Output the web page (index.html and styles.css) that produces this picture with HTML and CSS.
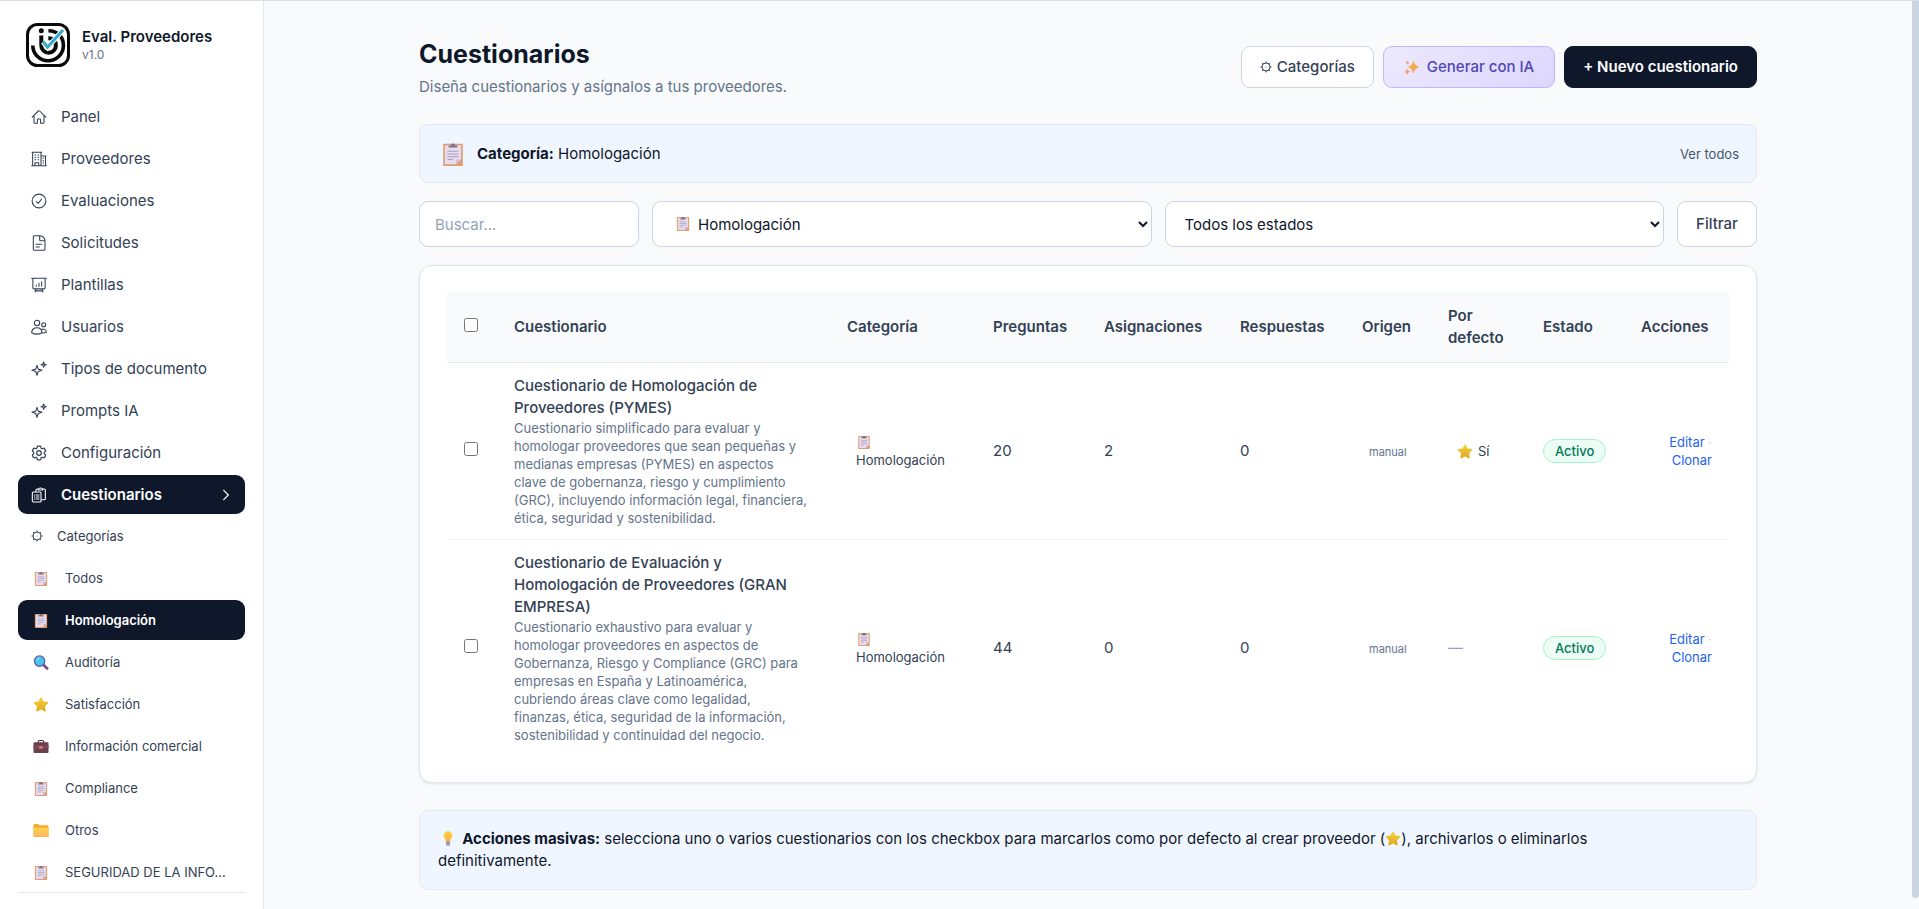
FILE: index.html
```
<!DOCTYPE html>
<html lang="es">
<head>
  <meta charset="utf-8">
  <title>Cuestionarios - Eval. Proveedores</title>
  <link rel="stylesheet" href="styles.css">
</head>
<body>
  <!-- Icon sprite -->
  <svg class="sprite" aria-hidden="true">
    <defs>
      <linearGradient id="g-star" x1="0" y1="0" x2="0" y2="1">
        <stop offset="0" stop-color="#f4cf3c"/><stop offset="1" stop-color="#e0aa1e"/>
      </linearGradient>
      <linearGradient id="g-folder" x1="0" y1="0" x2="0" y2="1">
        <stop offset="0" stop-color="#ffd24d"/><stop offset="1" stop-color="#fdb562"/>
      </linearGradient>
      <linearGradient id="g-spark" x1="0" y1="0" x2="1" y2="1">
        <stop offset="0" stop-color="#fbc02d"/><stop offset="1" stop-color="#f98b5c"/>
      </linearGradient>
    </defs>
    <symbol id="i-home" viewBox="0 0 24 24"><path d="M1.8 12.3 11 3a1.4 1.4 0 0 1 2 0l9.200 9.300M4.500 9.800v10.600c0 .6.500 1.100 1.100 1.100h4v-5.300c0-.7.500-1.200 1.100-1.200h2.600c.6 0 1.100.5 1.100 1.200v5.300h4c.6 0 1.100-.5 1.100-1.100V9.800"/></symbol>
    <symbol id="i-building" viewBox="0 0 24 24"><path d="M1 22h22M2.500 22V2M15 22V7.500M1.500 2h14.500M15.500 7.500h7M21.800 22V7.500M6 6h1M10.500 6h1M6 9.500h1M10.500 9.500h1M6 13h1M10.500 13h1M18 11h1M18 14.500h1M18 18h1M15 2v6M6 22v-4.500h5.500V22"/></symbol>
    <symbol id="i-check" viewBox="0 0 24 24"><circle cx="12" cy="12" r="10.300"/><path d="m8 12.800 2.800 2.700L16 9"/></symbol>
    <symbol id="i-doc" viewBox="0 0 24 24"><path d="M13.500 1H5a1.500 1.500 0 0 0-1.500 1.500v19A1.500 1.500 0 0 0 5 23h14.500a1.500 1.500 0 0 0 1.500-1.500V9.500C21 5 18 1 13.500 1zM13 1.500v5.500c0 .8.500 1.500 1.500 1.500H21M7.500 14h8.500M7.500 18h5"/></symbol>
    <symbol id="i-board" viewBox="0 0 24 24"><path d="M1 2h22M2.800 2v14c0 1 .8 1.800 1.800 1.800h14.800c1 0 1.800-.8 1.800-1.800V2M7.500 18 6 22.500M16.500 18l1.500 4.500M7 20.800h10M8 14v-2M12 14V9.500M16 14V7"/></symbol>
    <symbol id="i-users" viewBox="0 0 24 24"><circle cx="9" cy="6" r="4"/><circle cx="19" cy="8.500" r="3"/><path d="M1 20.500c0-4.500 3.300-7.500 8-7.500s7.500 3 7.500 7.500c-4.500 2.600-11 2.600-15.500 0zM16.500 21c2.500.3 4.700 0 6.500-1 0-3.500-3.500-6-7.500-4.300"/></symbol>
    <symbol id="i-sparkle" viewBox="0 0 24 24"><path d="M9 6.500 10.800 12.200 16.500 14l-5.700 1.800L9 21.500l-1.800-5.700L1.500 14l5.700-1.800zM19 1.500l1 3 3 1-3 1-1 3-1-3-3-1 3-1z"/></symbol>
    <symbol id="i-gear" viewBox="1.500 1.500 21 21"><path d="M9.600 3.900c.1-.5.500-.9 1.100-.9h2.600c.6 0 1 .4 1.100.9l.2 1.300c.1.400.3.700.6.900l.3.100c.3.200.7.300 1.100.1l1.200-.5c.5-.2 1.100 0 1.400.5l1.300 2.200c.3.500.2 1.100-.3 1.500l-1 .8c-.3.200-.4.600-.4 1v.4c0 .4.100.7.400 1l1 .8c.4.300.5 1 .3 1.400l-1.300 2.300c-.3.500-.9.700-1.400.5l-1.200-.5c-.4-.1-.8-.1-1.100.1l-.3.200c-.3.200-.5.500-.6.900l-.2 1.200c-.1.600-.5 1-1.100 1h-2.600c-.6 0-1-.4-1.100-1l-.2-1.200c-.1-.4-.3-.7-.6-.9l-.3-.2c-.3-.2-.7-.2-1.100-.1l-1.200.5c-.5.200-1.100 0-1.400-.5l-1.300-2.300c-.3-.4-.2-1.100.3-1.400l1-.8c.3-.3.400-.6.400-1v-.4c0-.4-.1-.8-.4-1l-1-.8c-.5-.4-.6-1-.3-1.500l1.300-2.200c.3-.5.900-.7 1.400-.5l1.200.5c.4.200.8.100 1.100-.1l.3-.1c.3-.2.500-.5.600-.9z"/><circle cx="12" cy="12" r="3"/></symbol>
    <symbol id="i-clips" viewBox="0 0 24 24"><path d="M3.500 7.500h10c.8 0 1.500.7 1.500 1.500v12c0 .8-.7 1.500-1.500 1.500h-10C2.700 22.500 2 21.800 2 21V9c0-.8.700-1.500 1.500-1.500zM7.500 7V4.500c0-.8.700-1.500 1.500-1.500h2M17.500 3H20c.8 0 1.500.7 1.500 1.500v13c0 .8-.7 1.500-1.500 1.500h-4.500M11 4.500c0-2 1.300-3 3.200-3s3.300 1 3.300 3zM5 12h.8M8 12h4M5 15h.8M8 15h4M5 18h.8M8 18h4"/></symbol>
    <symbol id="i-chevron" viewBox="0 0 24 24"><path d="m8 4 8 8-8 8"/></symbol>
    <symbol id="i-cog" viewBox="0 0 12 12"><circle cx="6" cy="6" r="4"/><path d="M6 .5V2M6 10v1.500M.5 6H2M10 6h1.500M2.100 2.100l1 1M8.900 8.900l1 1M2.100 9.900l1-1M8.900 3.100l1-1M5.600 6h.8"/></symbol>

    <symbol id="e-clipboard" viewBox="0 0 18 22"><rect x="0" y="1.500" width="18" height="20.500" rx="1" fill="#e39a6c"/><path d="M1.500 3h15v13l-4.500 4.500H1.500z" fill="#e6dcf0"/><path d="M16.500 16 12 20.500V16z" fill="#c9bcd8"/><path d="M5 5V3.300h2a2 2 0 0 1 4 0h2V5z" fill="#7c7386"/><path d="M4 8.500h10M4 11h10M4 13.500h10M4 16h5" stroke="#a99db8" stroke-width="1"/></symbol>
    <symbol id="e-search" viewBox="0 0 16 16"><path d="m10.500 10.500 4 3.800" stroke="#7b4a8c" stroke-width="3" stroke-linecap="round"/><circle cx="6.500" cy="6.500" r="5.500" fill="#4cc4ea" stroke="#5a5fa8" stroke-width="1.400"/><path d="M3.500 6a3 3 0 0 1 3-2.800" stroke="#a5e6f8" fill="none"/></symbol>
    <symbol id="e-star" viewBox="0 0 16 16"><path d="M8 1.200 10.100 5.400 15 6.200 11.500 9.700 12.300 14.700 8 12.500 3.700 14.700 4.500 9.700 1 6.200 5.900 5.400z" fill="url(#g-star)" stroke="url(#g-star)" stroke-width="1.500" stroke-linejoin="round"/></symbol>
    <symbol id="e-case" viewBox="0 0 16 16"><path d="M5.200 4V2.600c0-.6.400-1 1-1h3.600c.6 0 1 .4 1 1V4" fill="none" stroke="#4c2f3c" stroke-width="1.300"/><rect x="0" y="3.500" width="16" height="11.500" rx="1.200" fill="#6b4050"/><path d="M0 7h16v2.500H0z" fill="#7b4a58"/><rect x="6" y="7.500" width="4" height="3" rx=".5" fill="#d9775f"/></symbol>
    <symbol id="e-folder" viewBox="0 0 16 16"><path d="M0 2.500C0 1.700.5 1 1.300 1H5l1.500 1.500h8.200c.8 0 1.300.6 1.300 1.300V14c0 .6-.5 1-1 1H1c-.6 0-1-.4-1-1z" fill="#f3ad2a"/><path d="M0 5h16v9c0 .6-.5 1-1 1H1c-.6 0-1-.4-1-1z" fill="url(#g-folder)"/></symbol>
    <symbol id="e-sparkles" viewBox="0 0 16 16"><path d="M9.500.3c.8 3.700 2.200 5.800 6.300 7.200-4.100 1.400-5.500 3.500-6.300 7.200-.8-3.700-2.200-5.800-6.300-7.200C7.300 6.100 8.700 4 9.500.3z" fill="url(#g-spark)"/><path d="M3 9.500c.3 1.800.9 2.500 2.700 3-1.800.5-2.400 1.200-2.700 3-.3-1.800-.9-2.500-2.700-3 1.800-.5 2.400-1.200 2.700-3zM3.200 1c.2 1 .6 1.500 1.600 1.800-1 .3-1.400.8-1.600 1.800-.2-1-.6-1.500-1.600-1.800 1-.3 1.400-.8 1.600-1.800z" fill="#f9966b" stroke="#f9966b" stroke-width=".5"/></symbol>
    <symbol id="e-bulb" viewBox="0 0 12 16"><path d="M6 .3a4.700 4.700 0 0 1 4.700 4.800c0 2.500-2 3.600-2.300 5.900H3.600C3.300 8.700 1.300 7.600 1.300 5.100A4.700 4.700 0 0 1 6 .3z" fill="#fcc940"/><path d="M4.600 5.500 5.400 11h1.200l.8-5.500" fill="none" stroke="#f79a3c" stroke-width=".8"/><path d="M3.700 11h4.600v2.800L7.400 15.700H4.600l-.9-1.900z" fill="#a994b4"/></symbol>
  </svg>

  <aside class="sidebar">
    <div class="brand">
      <svg class="brand-logo" viewBox="0 0 44 44" fill="none">
        <rect x="1.500" y="1.500" width="41" height="41" rx="10" fill="#fff" stroke="#0a0a0a" stroke-width="3"/>
        <circle cx="15.300" cy="7.800" r="2.500" fill="#0a0a0a"/>
        <path d="M6.800 22.500a15.300 15.300 0 0 0 30.600 0c0-9-6-14.500-15-14.700" stroke="#0a0a0a" stroke-width="3.600"/>
        <path d="M15.300 12.500v10a7.300 7.300 0 0 0 14.600 0c0-4.500-3-7.200-7.600-7.200" stroke="#0a0a0a" stroke-width="4"/>
        <path d="m17 19 4.500 5.500L37 7" stroke="#fff" stroke-width="5"/>
        <path d="m17 18.500 4.500 5.700L37 7" stroke="#35a9cc" stroke-width="3"/>
      </svg>
      <div>
        <div class="brand-name">Eval. Proveedores</div>
        <div class="brand-version">v1.0</div>
      </div>
    </div>

    <nav class="nav">
      <a href="#" class="nav-item"><svg class="icon"><use href="#i-home"/></svg>Panel</a>
      <a href="#" class="nav-item"><svg class="icon"><use href="#i-building"/></svg>Proveedores</a>
      <a href="#" class="nav-item"><svg class="icon"><use href="#i-check"/></svg>Evaluaciones</a>
      <a href="#" class="nav-item"><svg class="icon"><use href="#i-doc"/></svg>Solicitudes</a>
      <a href="#" class="nav-item"><svg class="icon"><use href="#i-board"/></svg>Plantillas</a>
      <a href="#" class="nav-item"><svg class="icon"><use href="#i-users"/></svg>Usuarios</a>
      <a href="#" class="nav-item"><svg class="icon"><use href="#i-sparkle"/></svg>Tipos de documento</a>
      <a href="#" class="nav-item"><svg class="icon"><use href="#i-sparkle"/></svg>Prompts IA</a>
      <a href="#" class="nav-item"><svg class="icon"><use href="#i-gear"/></svg>Configuración</a>
      <a href="#" class="nav-item active"><svg class="icon"><use href="#i-clips"/></svg>Cuestionarios<svg class="icon icon-chevron"><use href="#i-chevron"/></svg></a>
    </nav>

    <nav class="subnav">
      <a href="#" class="subnav-item subnav-settings"><svg class="cog"><use href="#i-cog"/></svg>Categorías</a>
      <a href="#" class="subnav-item"><svg class="emoji"><use href="#e-clipboard"/></svg><span>Todos</span></a>
      <a href="#" class="subnav-item active"><svg class="emoji"><use href="#e-clipboard"/></svg><span>Homologación</span></a>
      <a href="#" class="subnav-item"><svg class="emoji"><use href="#e-search"/></svg><span>Auditoría</span></a>
      <a href="#" class="subnav-item"><svg class="emoji"><use href="#e-star"/></svg><span>Satisfacción</span></a>
      <a href="#" class="subnav-item"><svg class="emoji"><use href="#e-case"/></svg><span>Información comercial</span></a>
      <a href="#" class="subnav-item"><svg class="emoji"><use href="#e-clipboard"/></svg><span>Compliance</span></a>
      <a href="#" class="subnav-item"><svg class="emoji"><use href="#e-folder"/></svg><span>Otros</span></a>
      <a href="#" class="subnav-item"><svg class="emoji"><use href="#e-clipboard"/></svg><span>SEGURIDAD DE LA INFO...</span></a>
    </nav>
  </aside>

  <main class="main">
    <div class="container">
      <header class="page-header">
        <div>
          <h1>Cuestionarios</h1>
          <p>Diseña cuestionarios y asígnalos a tus proveedores.</p>
        </div>
        <div class="page-actions">
          <button type="button" class="btn"><svg class="cog"><use href="#i-cog"/></svg>Categorías</button>
          <button type="button" class="btn btn-ai"><svg class="emoji"><use href="#e-sparkles"/></svg>Generar con IA</button>
          <button type="button" class="btn btn-primary">+ Nuevo cuestionario</button>
        </div>
      </header>

      <div class="banner">
        <svg class="banner-icon"><use href="#e-clipboard"/></svg>
        <div><strong>Categoría:</strong> Homologación</div>
        <a href="#" class="banner-link">Ver todos</a>
      </div>

      <form class="filters">
        <input type="search" class="field field-search" placeholder="Buscar..." aria-label="Buscar">
        <div class="select-wrap">
          <select class="field field-icon" aria-label="Categoría">
            <option>Homologación</option>
          </select>
          <svg class="emoji select-icon"><use href="#e-clipboard"/></svg>
        </div>
        <div class="select-wrap">
          <select class="field" aria-label="Estado">
            <option>Todos los estados</option>
          </select>
        </div>
        <button type="button" class="btn btn-filter">Filtrar</button>
      </form>

      <section class="card">
        <table class="table">
          <colgroup>
            <col class="col-check">
            <col>
            <col class="col-category">
            <col class="col-questions">
            <col class="col-assigned">
            <col class="col-answers">
            <col class="col-origin">
            <col class="col-default">
            <col class="col-status">
            <col class="col-actions">
          </colgroup>
          <thead>
            <tr>
              <th><input type="checkbox" aria-label="Seleccionar todos"></th>
              <th>Cuestionario</th>
              <th>Categoría</th>
              <th>Preguntas</th>
              <th>Asignaciones</th>
              <th>Respuestas</th>
              <th>Origen</th>
              <th>Por defecto</th>
              <th>Estado</th>
              <th>Acciones</th>
            </tr>
          </thead>
          <tbody>
            <tr>
              <td><input type="checkbox" aria-label="Seleccionar PYMES"></td>
              <td>
                <div class="q-title">Cuestionario de Homologación de Proveedores (PYMES)</div>
                <div class="q-desc">Cuestionario simplificado para evaluar y homologar proveedores que sean pequeñas y medianas empresas (PYMES) en aspectos clave de gobernanza, riesgo y cumplimiento (GRC), incluyendo información legal, financiera, ética, seguridad y sostenibilidad.</div>
              </td>
              <td><div class="tag"><svg class="emoji emoji-sm"><use href="#e-clipboard"/></svg><span>Homologación</span></div></td>
              <td>20</td>
              <td>2</td>
              <td>0</td>
              <td><span class="origin">manual</span></td>
              <td><span class="default-yes"><svg class="emoji"><use href="#e-star"/></svg>Sí</span></td>
              <td><span class="badge">Activo</span></td>
              <td class="actions"><a href="#">Editar</a> · <a href="#">Clonar</a></td>
            </tr>
            <tr>
              <td><input type="checkbox" aria-label="Seleccionar GRAN EMPRESA"></td>
              <td>
                <div class="q-title">Cuestionario de Evaluación y Homologación de Proveedores (GRAN EMPRESA)</div>
                <div class="q-desc">Cuestionario exhaustivo para evaluar y homologar proveedores en aspectos de Gobernanza, Riesgo y Compliance (GRC) para empresas en España y Latinoamérica, cubriendo áreas clave como legalidad, finanzas, ética, seguridad de la información, sostenibilidad y continuidad del negocio.</div>
              </td>
              <td><div class="tag"><svg class="emoji emoji-sm"><use href="#e-clipboard"/></svg><span>Homologación</span></div></td>
              <td>44</td>
              <td>0</td>
              <td>0</td>
              <td><span class="origin">manual</span></td>
              <td><span class="default-no">—</span></td>
              <td><span class="badge">Activo</span></td>
              <td class="actions"><a href="#">Editar</a> · <a href="#">Clonar</a></td>
            </tr>
          </tbody>
        </table>
      </section>

      <div class="notice">
        <svg class="emoji notice-icon"><use href="#e-bulb"/></svg>
        <strong>Acciones masivas:</strong> selecciona uno o varios cuestionarios con los checkbox para marcarlos como por defecto al crear proveedor (<svg class="emoji"><use href="#e-star"/></svg>), archivarlos o eliminarlos<br>
        definitivamente.
      </div>
    </div>
  </main>
  <div class="scrollbar"></div>
</body>
</html>
```
FILE: styles.css
```
:root {
  --ink: #0f172a;
  --text: #334155;
  --muted: #64748b;
  --faint: #94a3b8;
  --border: #e2e8f0;
  --border-strong: #cbd5e1;
  --background: #f8fafc;
  --surface: #ffffff;
  --info: #eff6ff;
  --link: #2563eb;
  --radius: 9px;
}

* {
  box-sizing: border-box;
}

body {
  margin: 0;
  display: flex;
  min-height: 100vh;
  border-top: 1px solid #dcdfe4;
  font-family: Inter, "Liberation Sans", sans-serif;
  font-size: 15px;
  line-height: 22px;
  color: var(--ink);
  background: var(--background);
}

a {
  color: inherit;
  text-decoration: none;
}

button,
input,
select {
  font: inherit;
}

.sprite {
  position: absolute;
  width: 0;
  height: 0;
}

.icon {
  width: 16px;
  height: 16px;
  flex: none;
  fill: none;
  stroke: currentColor;
  stroke-width: 1.6;
  stroke-linecap: round;
  stroke-linejoin: round;
}

.cog {
  width: 12px;
  height: 12px;
  flex: none;
  fill: none;
  stroke: currentColor;
}

.emoji {
  width: 16px;
  height: 15px;
  flex: none;
  vertical-align: -2px;
}

/* Sidebar */
.sidebar {
  width: 264px;
  flex: none;
  padding: 22px 18px 0;
  background: var(--surface);
  border-right: 1px solid var(--border);
}

.brand {
  display: flex;
  align-items: center;
  gap: 12px;
  padding: 0 8px;
  margin-bottom: 30px;
}

.brand-logo {
  width: 44px;
  height: 44px;
}

.brand-name {
  font-weight: 600;
  line-height: 20px;
}

.brand-version {
  font-size: 12px;
  line-height: 16px;
  color: var(--muted);
}

.nav {
  display: flex;
  flex-direction: column;
  gap: 3px;
}

.nav-item {
  display: flex;
  align-items: center;
  gap: 14px;
  height: 39px;
  padding: 0 12px 0 13px;
  border-radius: var(--radius);
  color: var(--text);
}

.nav-item.active,
.subnav-item.active {
  background: var(--ink);
  color: #fff;
  font-weight: 600;
}

.icon-chevron {
  width: 14px;
  height: 14px;
  margin-left: auto;
  stroke-width: 2;
}

.subnav {
  display: flex;
  flex-direction: column;
  gap: 2px;
  padding-top: 2px;
  border-bottom: 1px solid var(--border);
}

.subnav-item {
  display: flex;
  align-items: center;
  gap: 16px;
  height: 40px;
  padding: 0 14px 0 15px;
  border-radius: var(--radius);
  font-size: 13px;
  color: var(--text);
}

.subnav-item span {
  overflow: hidden;
  white-space: nowrap;
  text-overflow: ellipsis;
}

.subnav-settings {
  gap: 14px;
  padding-left: 13px;
}

/* Page */
.main {
  flex: 1;
  min-width: 0;
  padding: 35px 33px 18px;
  margin-right: 7px;
}

.container {
  max-width: 1338px;
  margin: 0 auto;
}

.page-header {
  display: flex;
  justify-content: space-between;
  align-items: center;
  margin-bottom: 26px;
}

.page-header h1 {
  margin: 0 0 4px;
  font-size: 25px;
  line-height: 36px;
  font-weight: 700;
}

.page-header p {
  margin: 0;
  color: var(--muted);
}

.page-actions {
  display: flex;
  gap: 9px;
}

.btn {
  display: flex;
  align-items: center;
  justify-content: center;
  gap: 5px;
  height: 42px;
  padding: 0 18px;
  border: 1px solid var(--border-strong);
  border-radius: var(--radius);
  background: var(--surface);
  color: var(--text);
  font-weight: 500;
  cursor: pointer;
}

.btn-ai {
  gap: 7px;
  padding: 0 20px;
  border-color: #c4b5fd;
  background: linear-gradient(135deg, #ede9fe, #ddd6fe);
  color: #4f46b5;
}

.btn-primary {
  border-color: var(--ink);
  background: var(--ink);
  color: #fff;
  font-weight: 600;
}

.banner {
  display: flex;
  align-items: center;
  gap: 13px;
  height: 59px;
  padding: 0 17px 0 22px;
  margin-bottom: 18px;
  border: 1px solid var(--border);
  border-radius: var(--radius);
  background: var(--info);
}

.banner-icon {
  width: 22px;
  height: 24px;
}

.banner-link {
  margin-left: auto;
  font-size: 13px;
  color: #475569;
}

/* Filters */
.filters {
  display: flex;
  gap: 13px;
  margin-bottom: 18px;
}

.field {
  width: 100%;
  height: 46px;
  padding: 0 15px;
  border: 1px solid var(--border-strong);
  border-radius: var(--radius);
  background: var(--surface);
  color: var(--ink);
}

.field::placeholder {
  color: var(--faint);
}

.field-search {
  width: 220px;
  flex: none;
}

.select-wrap {
  position: relative;
  flex: 1;
}

.select-wrap .field {
  padding: 0 0 0 15px;
}

.select-wrap .field-icon {
  padding-left: 41px;
}

/* Sits over the select, next to the chosen option */
.select-icon {
  position: absolute;
  left: 23px;
  top: 15px;
  pointer-events: none;
}

.btn-filter {
  width: 80px;
  height: 46px;
}

/* Table */
.card {
  padding: 26px 27px;
  margin-bottom: 27px;
  border: 1px solid var(--border);
  border-radius: 13px;
  background: var(--surface);
  box-shadow: 0 1px 3px rgba(15, 23, 42, 0.1);
}

.table {
  width: 100%;
  table-layout: fixed;
  border-collapse: collapse;
  color: var(--text);
}

.col-check { width: 49px; }
.col-category { width: 146px; }
.col-questions { width: 111px; }
.col-assigned { width: 136px; }
.col-answers { width: 122px; }
.col-origin { width: 86px; }
.col-default { width: 95px; }
.col-status { width: 98px; }
.col-actions { width: 106px; }

.table th,
.table td {
  padding: 12px 17px 12px 18px;
  text-align: left;
  vertical-align: middle;
}

.table th {
  padding-top: 13px;
  padding-bottom: 13px;
  font-weight: 600;
  background: var(--background);
  border-bottom: 1px solid var(--border);
}

.table th:first-child,
.table td:first-child {
  padding-left: 17px;
}

.table tbody tr + tr {
  border-top: 1px solid #f1f5f9;
}

.table input[type="checkbox"] {
  display: block;
  width: 14px;
  height: 14px;
  margin: 0 0 5px;
}

.q-title {
  font-weight: 500;
}

.q-desc {
  padding-right: 4px;
  font-size: 13px;
  line-height: 18px;
  color: var(--muted);
}

.tag {
  display: flex;
  flex-direction: column;
  gap: 2px;
  padding: 2px 9px 0;
  font-size: 13px;
  line-height: 18px;
}

.emoji-sm {
  height: 14px;
}

.origin {
  padding: 0 7px;
  font-size: 11px;
  color: var(--muted);
}

.default-yes {
  display: flex;
  align-items: center;
  gap: 5px;
  padding-left: 9px;
  font-size: 13px;
}

.default-no {
  color: var(--faint);
}

.badge {
  display: inline-block;
  padding: 0 11px;
  border: 1px solid #a7f3d0;
  border-radius: 12px;
  background: #ecfdf5;
  color: #047857;
  font-size: 13px;
  font-weight: 500;
}

.table .actions {
  padding-left: 40px;
  text-align: right;
  font-size: 13px;
  line-height: 18px;
  color: var(--border-strong);
}

.actions a {
  color: var(--link);
}

/* Notice */
.notice {
  padding: 17px 18px;
  border: 1px solid var(--border);
  border-radius: var(--radius);
  background: var(--info);
}

.notice-icon {
  width: 20px;
}

/* Page scroll indicator, drawn over the right edge */
.scrollbar {
  position: fixed;
  top: 1px;
  right: 0;
  bottom: 11px;
  width: 7px;
  border-radius: 0 0 4px 4px;
  background: var(--border-strong);
}
```
